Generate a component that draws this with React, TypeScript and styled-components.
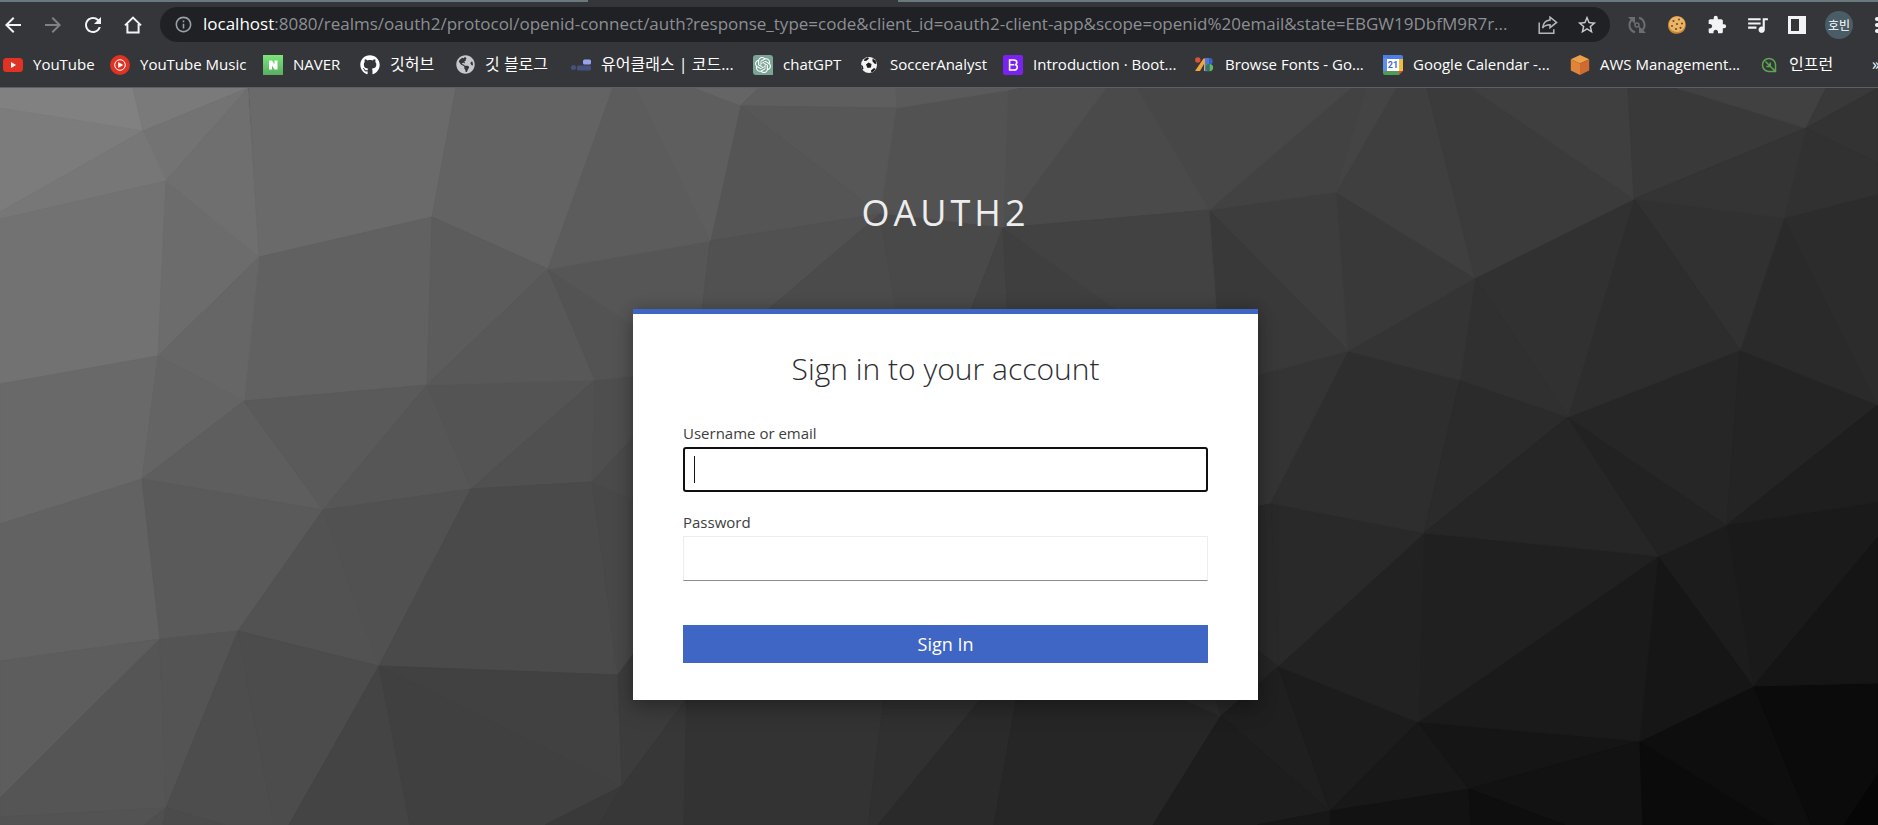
import React from 'react';
import styled, { createGlobalStyle } from 'styled-components';
import {
  MdArrowBack,
  MdArrowForward,
  MdExtension,
  MdInfoOutline,
  MdMoreVert,
  MdQueueMusic,
  MdRefresh,
  MdStarBorder,
} from 'react-icons/md';
import { FaGithub, FaGlobeAmericas } from 'react-icons/fa';
import { SiOpenai } from 'react-icons/si';

const GlobalStyle = createGlobalStyle`
  *, *::before, *::after { box-sizing: border-box; }
  html, body, #root { height: 100%; }
  body {
    margin: 0;
    overflow: hidden;
    background: #35363a;
    font-family: "Open Sans", "Noto Sans CJK KR", sans-serif;
  }
`;

const Screen = styled.div`
  display: flex;
  flex-direction: column;
  min-height: 100%;
`;

/* Browser chrome */

const TabEdge = styled.div`
  display: grid;
  grid-template-columns: 588fr 310fr 980fr;
  height: 2px;
  flex: none;
  background: #35363a;
`;

const InactiveTabs = styled.div<{ $start?: boolean }>`
  grid-column: ${(p) => (p.$start ? 1 : 3)};
  background: #69797e;
`;

const Toolbar = styled.header`
  display: flex;
  align-items: center;
  height: 45px;
  flex: none;
  background: #35363a;
  color: #f1f3f4;
`;

const NavButtons = styled.nav`
  display: flex;
  flex: none;
  width: 160px;
  padding-left: 1px;
  gap: 16px;
`;

const IconButton = styled.button<{ $color?: string; $narrow?: boolean }>`
  display: flex;
  align-items: center;
  justify-content: center;
  flex: none;
  width: ${(p) => (p.$narrow ? 16 : 24)}px;
  height: 24px;
  padding: 0;
  border: 0;
  background: none;
  color: ${(p) => p.$color ?? '#f1f3f4'};

  svg {
    flex: none;
  }
`;

const Omnibox = styled.div`
  display: flex;
  align-items: center;
  flex: 1;
  min-width: 0;
  height: 35px;
  padding: 0 11px;
  border-radius: 18px;
  background: #202124;
`;

const Address = styled.div`
  flex: 1;
  min-width: 0;
  margin-left: 8px;
  padding-bottom: 2px;
  overflow: hidden;
  white-space: nowrap;
  font-size: 17px;
  line-height: 24px;
  color: #8c8f93;

  strong {
    font-weight: 400;
    color: #ffffff;
  }
`;

const OmniActions = styled.div`
  display: flex;
  gap: 15px;
`;

const Extensions = styled.div`
  display: flex;
  align-items: center;
  flex: none;
  width: 268px;
  padding-left: 15px;
  gap: 16px;
  overflow: hidden;
`;

const Avatar = styled.button`
  display: flex;
  align-items: center;
  justify-content: center;
  flex: none;
  width: 28px;
  height: 28px;
  padding: 0;
  border: 0;
  border-radius: 50%;
  background: #4a5c66;
  color: #ffffff;
  font-family: "Noto Sans CJK KR", sans-serif;
  font-size: 12px;
  line-height: 16px;
`;

const BookmarkBar = styled.nav`
  display: flex;
  align-items: center;
  flex: none;
  height: 41px;
  padding: 0 0 5px 3px;
  overflow: hidden;
  background: #35363a;
  border-bottom: 1px solid #5f6062;
`;

const Bookmark = styled.a<{ $width: number; $korean?: boolean }>`
  display: flex;
  align-items: center;
  flex: 0 0 ${(p) => p.$width}px;
  gap: 10px;
  color: #ffffff;
  text-decoration: none;
  white-space: nowrap;
  font-size: ${(p) => (p.$korean ? 16 : 15)}px;
  line-height: 22px;

  svg {
    flex: none;
  }

  span {
    padding-bottom: 2px;
  }
`;

const Overflow = styled.button`
  flex: none;
  margin-left: auto;
  width: 6px;
  padding: 0 0 2px;
  border: 0;
  background: none;
  color: #ffffff;
  font-family: inherit;
  font-size: 16px;
  line-height: 22px;
`;

/* Login page */

const Page = styled.main`
  position: relative;
  display: flex;
  flex-direction: column;
  align-items: center;
  flex: 1;
  padding: 103px 16px 24px 29px;
  background: #3a3a3a;
  overflow: hidden;
`;

const Backdrop = styled.svg`
  position: absolute;
  inset: 0;
  width: 100%;
  height: 100%;
`;

const Realm = styled.h1`
  position: relative;
  margin: 0 0 74px;
  color: #ededed;
  font-size: 36px;
  font-weight: 400;
  line-height: 44px;
  letter-spacing: 4px;
  text-transform: uppercase;
`;

const Card = styled.section`
  position: relative;
  width: 100%;
  max-width: 625px;
  padding: 32px 50px 37px;
  border-top: 5px solid #4066c5;
  background: #ffffff;
  box-shadow: 0 10px 20px rgba(3, 3, 3, 0.2), 0 0 14px rgba(3, 3, 3, 0.2);
`;

const Title = styled.h2`
  margin: 0 0 31px;
  text-align: center;
  color: #2b2d30;
  font-size: 30px;
  font-weight: 300;
  line-height: 46px;
`;

const Form = styled.form`
  display: flex;
  flex-direction: column;
`;

const Field = styled.div`
  position: relative;
  display: flex;
  flex-direction: column;
  margin-bottom: 20px;
`;

const Label = styled.label`
  height: 24px;
  color: #404040;
  font-size: 15px;
  line-height: 20px;
`;

const Input = styled.input<{ $active?: boolean }>`
  width: 100%;
  height: 45px;
  padding: 0 10px;
  border: ${(p) => (p.$active ? '2px solid #101010' : '1px solid #ededed')};
  border-bottom-color: ${(p) => (p.$active ? '#101010' : '#8a8d90')};
  border-radius: ${(p) => (p.$active ? '3px' : '0')};
  outline: none;
  background: #ffffff;
  caret-color: transparent;
  color: #151515;
  font-family: inherit;
  font-size: 18px;
`;

const Caret = styled.span`
  position: absolute;
  left: 11px;
  bottom: 9px;
  width: 1px;
  height: 27px;
  background: #151515;
`;

const Submit = styled.button`
  height: 38px;
  margin-top: 24px;
  padding: 0;
  border: 0;
  background: #4066c5;
  color: #ffffff;
  font-family: inherit;
  font-size: 18px;
  line-height: 36px;
`;

/* Low-poly backdrop: [fill, points] */
const FACETS: [string, string][] = [
  ['#818181', '0,88 133,88 143,131 0,108'],
  ['#7c7c7c', '0,108 143,131 0,212'],
  ['#7a7a7a', '133,88 248,88 143,131'],
  ['#737373', '143,131 248,88 166,181'],
  ['#777777', '0,212 143,131 166,181 0,219'],
  ['#727272', '0,219 166,181 158,356 0,384'],
  ['#6c6c6c', '166,181 158,356 259,257'],
  ['#6f6f6f', '248,88 166,181 259,257'],
  ['#6a6a6a', '249,88 456,88 432,217 259,257'],
  ['#636363', '456,88 613,88 548,269 432,217'],
  ['#616161', '259,257 432,217 427,385 244,401'],
  ['#5c5c5c', '432,217 548,269 427,385'],
  ['#666666', '158,356 259,257 244,401'],
  ['#696969', '0,384 158,356 142,479 0,524'],
  ['#646464', '158,356 244,401 142,479'],
  ['#5e5e5e', '142,479 244,401 323,510'],
  ['#5a5a5a', '244,401 427,385 323,510'],
  ['#565656', '427,385 323,510 471,489'],
  ['#545454', '427,385 595,380 471,489'],
  ['#585858', '548,269 427,385 595,380'],
  ['#505050', '471,489 595,380 592,482'],
  ['#4e4e4e', '595,380 592,482 640,430 640,375'],
  ['#535353', '548,269 595,380 640,375 640,330'],
  ['#565656', '548,269 710,241 701,320 640,330'],
  ['#5c5c5c', '613,88 548,269 710,241 636,88'],
  ['#626262', '0,524 142,479 160,639 0,661'],
  ['#5a5a5a', '142,479 323,510 238,631 160,639'],
  ['#525252', '323,510 238,631 379,666'],
  ['#515151', '323,510 471,489 379,666'],
  ['#4a4a4a', '471,489 592,482 618,675 379,666'],
  ['#484848', '592,482 618,675 640,645 640,503'],
  ['#4a4a4a', '592,482 640,430 640,503'],
  ['#5d5d5d', '0,661 160,639 0,798'],
  ['#555555', '160,639 166,808 0,817 0,798'],
  ['#545454', '160,639 238,631 166,808'],
  ['#4d4d4d', '238,631 166,808 225,825 274,825'],
  ['#4c4c4c', '238,631 274,825 289,825 379,666'],
  ['#444444', '379,666 289,825 410,825'],
  ['#404040', '379,666 410,825 545,825 622,786'],
  ['#414141', '379,666 622,786 618,675'],
  ['#3c3c3c', '618,675 622,786 686,700 640,645'],
  ['#535353', '0,817 166,808 144,825 0,825'],
  ['#4f4f4f', '166,808 144,825 163,825'],
  ['#4b4b4b', '166,808 163,825 225,825'],
  ['#393939', '622,786 545,825 599,825'],
  ['#373737', '622,786 599,825 684,825 687,698'],
  ['#333333', '687,690 684,825 868,825 885,690'],
  ['#303030', '885,690 868,825 878,825 988,690'],
  ['#2a2a2a', '988,690 878,825 994,825 1018,690'],
  ['#262626', '1018,690 1160,690 1221,716 1153,825 994,825'],
  ['#2c2c2c', '1150,685 1221,716 1212,685'],
  ['#282828', '1212,685 1221,716 1260,682 1250,675'],
  ['#1f1f1f', '1221,716 1278,666 1330,811'],
  ['#1d1d1d', '1221,716 1330,811 1257,825 1153,825'],
  ['#1c1c1c', '1278,666 1418,722 1330,811'],
  ['#181818', '1330,811 1418,722 1469,789'],
  ['#121212', '1330,811 1469,789 1471,825 1329,825'],
  ['#171717', '1330,811 1257,825 1329,825'],
  ['#151515', '1418,722 1469,789 1640,741'],
  ['#121212', '1469,789 1640,741 1643,825 1565,825'],
  ['#0e0e0e', '1469,789 1471,825 1565,825'],
  ['#0b0b0b', '1640,741 1643,825 1775,825'],
  ['#0e0e0e', '1640,741 1754,686 1811,825 1775,825'],
  ['#0b0b0b', '1754,686 1878,683 1878,774 1844,825 1811,825'],
  ['#060606', '1878,774 1878,825 1844,825'],
  ['#1a1a1a', '1659,556 1640,741 1418,722'],
  ['#161616', '1659,556 1640,741 1754,686'],
  ['#1c1c1c', '1659,556 1727,525 1754,686'],
  ['#1a1a1a', '1727,525 1754,686 1878,537 1878,502'],
  ['#151515', '1754,686 1878,537 1878,683'],
  ['#202020', '1424,533 1659,556 1418,722'],
  ['#222222', '1424,533 1418,722 1278,666'],
  ['#292929', '1270,503 1424,533 1278,666'],
  ['#2a2a2a', '1270,503 1278,666 1250,645 1250,507'],
  ['#252525', '1278,666 1250,645 1250,690'],
  ['#2e2e2e', '1348,351 1270,503 1424,533 1460,380'],
  ['#2b2b2b', '1460,380 1424,533 1568,417'],
  ['#262626', '1568,417 1424,533 1659,556'],
  ['#222222', '1568,417 1659,556 1727,525'],
  ['#262626', '1568,417 1740,350 1727,525'],
  ['#242424', '1740,350 1878,405 1727,525'],
  ['#1e1e1e', '1727,525 1878,405 1878,502'],
  ['#2a2a2a', '1784,218 1740,350 1878,405'],
  ['#2c2c2c', '1784,218 1878,405 1878,194'],
  ['#313131', '1634,199 1784,218 1740,350'],
  ['#2d2d2d', '1634,199 1740,350 1568,417'],
  ['#313131', '1634,199 1568,417 1475,278'],
  ['#303030', '1475,278 1568,417 1460,380'],
  ['#343434', '1348,351 1475,278 1460,380'],
  ['#343434', '1348,351 1250,377 1250,507 1270,503'],
  ['#393939', '1336,192 1348,351 1475,278'],
  ['#3d3d3d', '1209,210 1336,192 1348,351'],
  ['#393939', '1209,210 1348,351 1250,377 1217,320'],
  ['#3f3f3f', '1336,192 1475,278 1427,88 1396,88'],
  ['#3b3b3b', '1475,278 1634,199 1471,88 1427,88'],
  ['#3f3f3f', '1634,199 1471,88 1628,88'],
  ['#393939', '1634,199 1628,88 1677,88 1806,128'],
  ['#414141', '1806,128 1677,88 1826,88'],
  ['#393939', '1806,128 1826,88 1878,88'],
  ['#333333', '1806,128 1878,88 1878,163'],
  ['#313131', '1806,128 1784,218 1878,194 1878,163'],
  ['#343434', '1634,199 1806,128 1784,218'],
  ['#424242', '1209,210 1336,192 1366,88 1351,88'],
  ['#444444', '1336,192 1366,88 1396,88'],
  ['#474747', '1209,210 1137,88 1351,88'],
  ['#4a4a4a', '1003,228 1209,210 1137,88 1106,88'],
  ['#4f4f4f', '1003,228 1106,88 1017,88 1008,90'],
  ['#525252', '880,214 896,108 1008,90 1003,228'],
  ['#5a5a5a', '896,108 895,88 1017,88 1008,90'],
  ['#656565', '740,106 693,88 759,88'],
  ['#5e5e5e', '740,106 759,88 895,88 896,108'],
  ['#575757', '740,106 896,108 880,214'],
  ['#555555', '740,106 880,214 710,241'],
  ['#5e5e5e', '740,106 710,241 636,88 693,88'],
  ['#515151', '710,241 880,214 756,320 701,320'],
  ['#4b4b4b', '880,214 756,320 898,320'],
  ['#494949', '880,214 1003,228 967,320 898,320'],
  ['#434343', '1003,228 967,320 1008,320'],
  ['#3f3f3f', '1003,228 1008,320 1130,320'],
  ['#424242', '1003,228 1209,210 1217,320 1130,320'],
];

const HomeIcon = () => (
  <svg width="20" height="20" viewBox="0 0 20 20" fill="none" stroke="#f1f3f4" strokeWidth="2">
    <path d="M2 10.4 10 2.6l8 7.8M4.4 9v8.6h11.2V9" />
  </svg>
);

const ShareIcon = () => (
  <svg width="20" height="20" viewBox="0 0 20 20" fill="none" stroke="#b4b7ba" strokeWidth="1.5">
    <path d="M1.2 7.5v10.8h14.6v-4M12 2.2l6.6 5.2L12 12.6V9.8c-3.4 0-5.8.9-7.4 3.2C5.1 8.4 7.9 5.5 12 5.1z" />
  </svg>
);

const CycleIcon = () => (
  <svg width="20" height="20" viewBox="0 0 20 20" fill="none" stroke="#6c6d70" strokeWidth="2">
    <path d="M8 17.300A7.500 7.500 0 0 1 4.500 5M12 2.700a7.500 7.500 0 0 1 3.500 12.300" />
    <path d="M1 2h7v7zM19 18h-7v-7z" fill="#6c6d70" stroke="none" />
    <circle cx="10" cy="10" r="2" strokeWidth="1.500" />
  </svg>
);

const CookieIcon = () => (
  <svg width="20" height="20" viewBox="0 0 20 20">
    <path d="M10 1c5 0 8.600 3.600 8.800 8.500.100 5.300-3.600 9.300-8.900 9.300S1 15.200 1 10.200C1 7.600 2 5.200 3.900 3.500 5.500 2 7.600 1 10 1z" fill="#c98636" />
    <path d="M10 1.500c4.600 0 7.800 3.200 8 7.600 0 4.500-3.300 7.900-8 7.900s-8-3-8-7.400c0-2.300.9-4.300 2.500-5.800C6 2.400 7.900 1.500 10 1.500z" fill="#e9b566" />
    <g fill="#7a4a22">
      <circle cx="6.500" cy="6" r="1.100" />
      <circle cx="12" cy="4.500" r="1" />
      <circle cx="10" cy="9" r="1.100" />
      <circle cx="15" cy="8.500" r="1.100" />
      <circle cx="5" cy="11" r="1" />
      <circle cx="9" cy="14" r="1.100" />
      <circle cx="13.500" cy="12.800" r="1.100" />
    </g>
  </svg>
);

const SidePanelIcon = () => (
  <svg width="18" height="18" viewBox="0 0 18 18">
    <path d="M0 0h18v18H0zM3 3v12h8V3z" fill="#f1f3f4" fillRule="evenodd" />
  </svg>
);

const YouTubeIcon = () => (
  <svg width="20" height="20" viewBox="0 0 20 20">
    <rect y="3" width="20" height="14" rx="3.500" fill="#e03324" />
    <path d="M8 7v6l5-3z" fill="#fff" />
  </svg>
);

const YouTubeMusicIcon = () => (
  <svg width="20" height="20" viewBox="0 0 20 20">
    <circle cx="10" cy="10" r="10" fill="#e03324" />
    <circle cx="10" cy="10" r="5.300" fill="none" stroke="#fff" strokeWidth="1" />
    <path d="M8.200 7v6l5-3z" fill="#fff" />
  </svg>
);

const NaverIcon = () => (
  <svg width="20" height="20" viewBox="0 0 20 20">
    <defs>
      <linearGradient id="naver" x1="0" y1="0" x2="0" y2="1">
        <stop offset="0" stopColor="#7ce57a" />
        <stop offset="1" stopColor="#58ad63" />
      </linearGradient>
    </defs>
    <rect width="20" height="20" fill="url(#naver)" />
    <path d="M6 5.500h3l2.500 4v-4h3v9h-3L9 10.500v4H6z" fill="#fff" />
  </svg>
);

const ClassIcon = () => (
  <svg width="20" height="20" viewBox="0 0 20 20">
    <circle cx="2.500" cy="12.500" r="2.500" fill="#47517e" />
    <rect x="6" y="10.500" width="14" height="5" rx="1.500" fill="#47517e" />
    <rect x="12" y="4.500" width="8" height="5" rx="1.500" fill="#96a5ee" />
  </svg>
);

const ChatIcon = () => (
  <svg width="20" height="20" viewBox="0 0 20 20">
    <path d="M3 0h14a3 3 0 0 1 3 3v17H3a3 3 0 0 1-3-3V3a3 3 0 0 1 3-3z" fill="#7ba697" />
    <SiOpenai x={2} y={2} size={16} color="#fff" />
  </svg>
);

const SoccerIcon = () => (
  <svg width="20" height="20" viewBox="0 0 20 20">
    <circle cx="9" cy="10" r="8" fill="#f2f2f2" />
    <path d="M6 9.500 8.500 7.500l3 1.500-.5 3.500-3.500.5z" fill="#1c1c1c" />
    <path d="M4.500 4 8 2.200l1 1.300L6.500 5.800 4 6zM12.500 3.500l3 2 1 3-1.500.5-2.500-2.500zM1.200 9.500l1.600 1.500.7 3-1 .5C1.500 13 1.100 11.500 1.200 9.500zM11 15.500l3-2.500 1.500 1c-1 1.800-2.400 3-4.300 3.600z" fill="#1c1c1c" />
  </svg>
);

const BootstrapIcon = () => (
  <svg width="20" height="20" viewBox="0 0 20 20">
    <rect width="20" height="20" rx="2" fill="#7a22f0" />
    <path d="M6.600 5h4.200c2 0 3 .9 3 2.400 0 1.200-.7 2-1.800 2.300 1.400.2 2.300 1.100 2.300 2.500 0 1.800-1.300 2.800-3.400 2.800H6.600zM6.600 9.700h4.600" fill="none" stroke="#fff" strokeWidth="1.600" />
  </svg>
);

const FontsIcon = () => (
  <svg width="20" height="20" viewBox="0 0 20 20">
    <path d="M8.500 3.500H11V16H9V9l-4 7H0z" fill="#f0a63a" />
    <circle cx="2.800" cy="5" r="2.700" fill="#d9503f" />
    <path d="M10 3h4.500v13.200H10z" fill="#4a76de" />
    <path d="M14.500 3a3.200 3.200 0 0 1 0 6.400z" fill="#3c62c4" />
    <path d="M14.500 9a3.600 3.600 0 0 1 0 7.200z" fill="#63b766" />
    <path d="M14.500 9a3.600 3.600 0 0 0 0 7.200z" fill="#2f7a56" />
  </svg>
);

const CalendarIcon = () => (
  <svg width="20" height="20" viewBox="0 0 20 20">
    <path d="M0 0h18a2 2 0 0 1 2 2v3H0z" fill="#4c7fe6" />
    <path d="M0 3h4v13H0z" fill="#5f8df0" />
    <path d="M16 4h4v12h-4z" fill="#f3bb3c" />
    <path d="M0 16h16v4H2a2 2 0 0 1-2-2z" fill="#4f9d55" />
    <path d="M16 16h4l-4 4z" fill="#dd4a3c" />
    <rect x="4" y="4" width="12" height="12" fill="#fff" />
    <text x="10" y="13" textAnchor="middle" fontFamily="Roboto, sans-serif" fontSize="9" fontWeight="700" fill="#3f6bd0">
      21
    </text>
  </svg>
);

const AwsIcon = () => (
  <svg width="20" height="20" viewBox="0 0 20 20">
    <path d="M10 0 19.200 4.200 10 8.500.8 4.200z" fill="#eda04a" />
    <path d="M.8 4.200 10 8.500V20L.8 15.600z" fill="#e08439" />
    <path d="M19.200 4.200 10 8.500V20l9.200-4.400z" fill="#cf6a30" />
  </svg>
);

const InflearnIcon = () => (
  <svg width="18" height="20" viewBox="0 0 18 20" fill="none" stroke="#5da64f" strokeWidth="1.500">
    <path d="M14.500 16.500H8A6.500 6.500 0 1 1 14.500 10zM4.500 6.500l9 9M9.300 7.500v4h-4" />
  </svg>
);

const BOOKMARKS: { label: string; width: number; icon: React.ReactNode; korean?: boolean }[] = [
  { label: 'YouTube', width: 107, icon: <YouTubeIcon /> },
  { label: 'YouTube Music', width: 153, icon: <YouTubeMusicIcon /> },
  { label: 'NAVER', width: 97, icon: <NaverIcon /> },
  { label: '깃허브', width: 96, icon: <FaGithub size={20} />, korean: true },
  { label: '깃 블로그', width: 115, icon: <FaGlobeAmericas size={19} color="#c4c7cb" />, korean: true },
  { label: '유어클래스 | 코드...', width: 182, icon: <ClassIcon />, korean: true },
  { label: 'chatGPT', width: 107, icon: <ChatIcon /> },
  { label: 'SoccerAnalyst', width: 143, icon: <SoccerIcon /> },
  { label: 'Introduction · Boot...', width: 192, icon: <BootstrapIcon /> },
  { label: 'Browse Fonts - Go...', width: 188, icon: <FontsIcon /> },
  { label: 'Google Calendar -...', width: 187, icon: <CalendarIcon /> },
  { label: 'AWS Management...', width: 191, icon: <AwsIcon /> },
  { label: '인프런', width: 90, icon: <InflearnIcon />, korean: true },
];

export default function App() {
  return (
    <Screen>
      <GlobalStyle />
      <TabEdge>
        <InactiveTabs $start />
        <InactiveTabs />
      </TabEdge>
      <Toolbar>
        <NavButtons>
          <IconButton aria-label="Back"><MdArrowBack size={24} /></IconButton>
          <IconButton aria-label="Forward" $color="#808184"><MdArrowForward size={24} /></IconButton>
          <IconButton aria-label="Reload"><MdRefresh size={24} /></IconButton>
          <IconButton aria-label="Home"><HomeIcon /></IconButton>
        </NavButtons>
        <Omnibox>
          <IconButton aria-label="Site information" $color="#9aa0a6"><MdInfoOutline size={19} /></IconButton>
          <Address>
            <strong>localhost</strong>
            :8080/realms/oauth2/protocol/openid-connect/auth?response_type=code&amp;client_id=oauth2-client-app&amp;scope=openid%20email&amp;state=EBGW19DbfM9R7r...
          </Address>
          <OmniActions>
            <IconButton aria-label="Share"><ShareIcon /></IconButton>
            <IconButton aria-label="Bookmark" $color="#c8cacc"><MdStarBorder size={22} /></IconButton>
          </OmniActions>
        </Omnibox>
        <Extensions>
          <IconButton aria-label="Sync"><CycleIcon /></IconButton>
          <IconButton aria-label="Cookies"><CookieIcon /></IconButton>
          <IconButton aria-label="Extensions"><MdExtension size={20} /></IconButton>
          <IconButton aria-label="Media"><MdQueueMusic size={25} /></IconButton>
          <IconButton aria-label="Side panel"><SidePanelIcon /></IconButton>
          <Avatar>호빈</Avatar>
          <IconButton aria-label="Menu" $narrow><MdMoreVert size={24} /></IconButton>
        </Extensions>
      </Toolbar>
      <BookmarkBar>
        {BOOKMARKS.map((b) => (
          <Bookmark key={b.label} href="#" $width={b.width} $korean={b.korean}>
            {b.icon}
            <span>{b.label}</span>
          </Bookmark>
        ))}
        <Overflow aria-label="More bookmarks">»</Overflow>
      </BookmarkBar>
      <Page>
        <Backdrop viewBox="0 88 1878 737" preserveAspectRatio="xMinYMin slice" aria-hidden="true">
          {FACETS.map(([fill, points]) => (
            <polygon key={points} points={points} fill={fill} stroke={fill} strokeWidth="1" />
          ))}
        </Backdrop>
        <Realm>oauth2</Realm>
        <Card>
          <Title>Sign in to your account</Title>
          <Form>
            <Field>
              <Label htmlFor="username">Username or email</Label>
              <Input id="username" type="text" $active />
              <Caret />
            </Field>
            <Field>
              <Label htmlFor="password">Password</Label>
              <Input id="password" type="password" />
            </Field>
            <Submit type="submit">Sign In</Submit>
          </Form>
        </Card>
      </Page>
    </Screen>
  );
}
